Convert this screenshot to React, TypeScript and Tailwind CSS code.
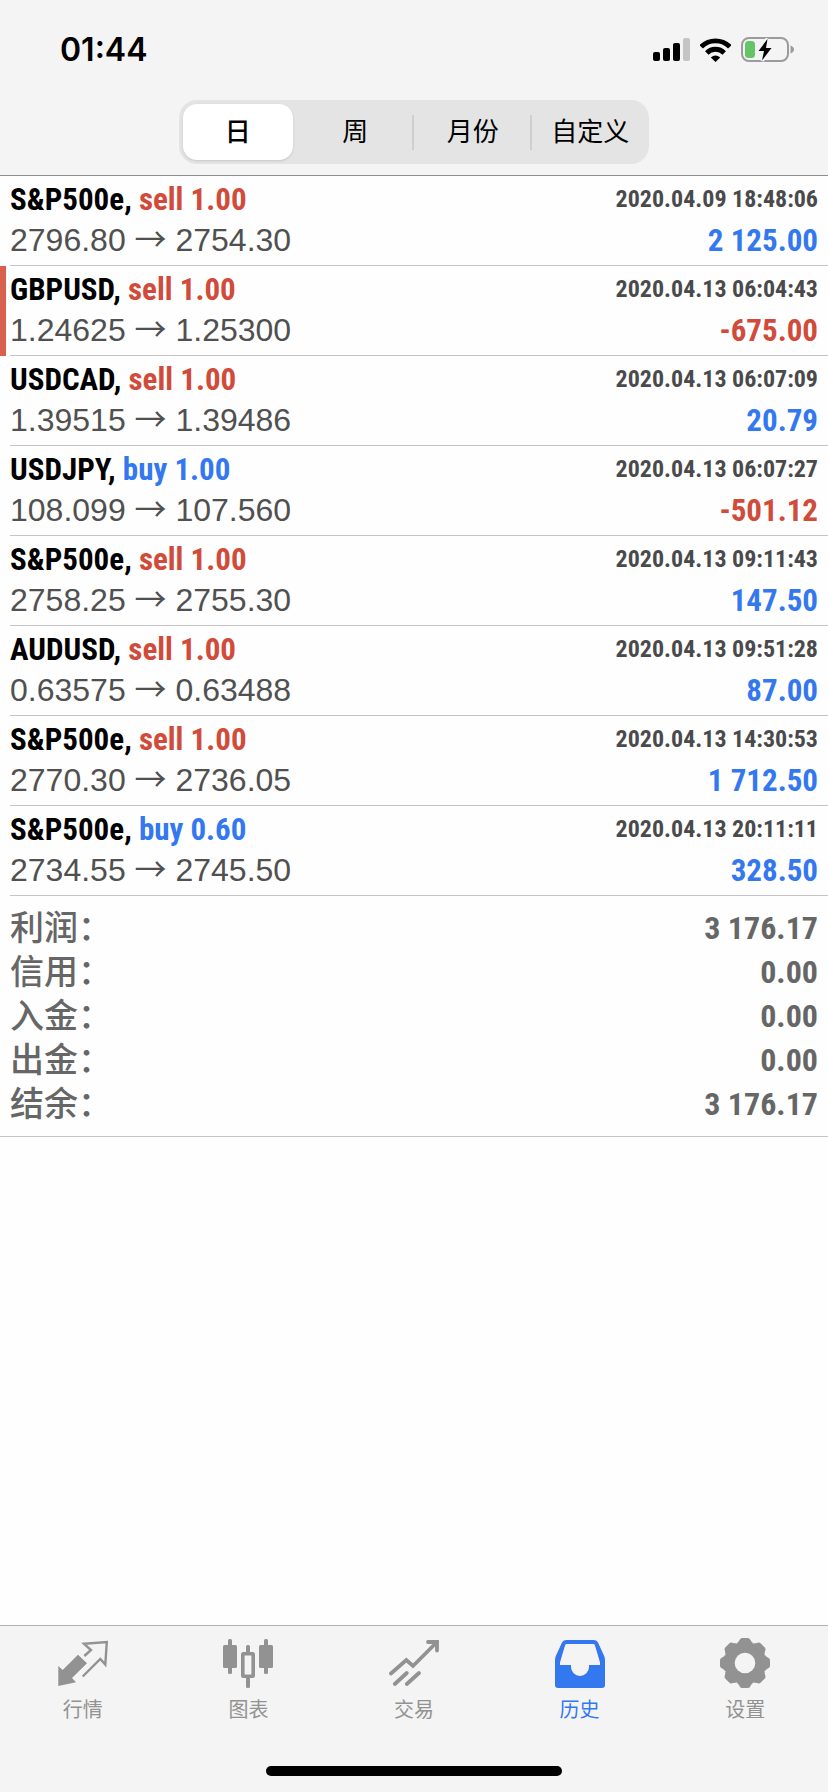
import { ReactNode, useState } from "react";
import clsx from "clsx";

type TDeal = {
  symbol: string;
  side: "sell" | "buy";
  volume: string;
  open: string;
  close: string;
  time: string;
  profit: string;
  marked?: boolean;
};

const DEALS: TDeal[] = [
  { symbol: "S&P500e", side: "sell", volume: "1.00", open: "2796.80", close: "2754.30", time: "2020.04.09 18:48:06", profit: "2 125.00" },
  { symbol: "GBPUSD", side: "sell", volume: "1.00", open: "1.24625", close: "1.25300", time: "2020.04.13 06:04:43", profit: "-675.00", marked: true },
  { symbol: "USDCAD", side: "sell", volume: "1.00", open: "1.39515", close: "1.39486", time: "2020.04.13 06:07:09", profit: "20.79" },
  { symbol: "USDJPY", side: "buy", volume: "1.00", open: "108.099", close: "107.560", time: "2020.04.13 06:07:27", profit: "-501.12" },
  { symbol: "S&P500e", side: "sell", volume: "1.00", open: "2758.25", close: "2755.30", time: "2020.04.13 09:11:43", profit: "147.50" },
  { symbol: "AUDUSD", side: "sell", volume: "1.00", open: "0.63575", close: "0.63488", time: "2020.04.13 09:51:28", profit: "87.00" },
  { symbol: "S&P500e", side: "sell", volume: "1.00", open: "2770.30", close: "2736.05", time: "2020.04.13 14:30:53", profit: "1 712.50" },
  { symbol: "S&P500e", side: "buy", volume: "0.60", open: "2734.55", close: "2745.50", time: "2020.04.13 20:11:11", profit: "328.50" },
];

const SUMMARY = [
  { label: "利润", value: "3 176.17" },
  { label: "信用", value: "0.00" },
  { label: "入金", value: "0.00" },
  { label: "出金", value: "0.00" },
  { label: "结余", value: "3 176.17" },
];

const PERIODS = ["日", "周", "月份", "自定义"];

const NARROW = "font-['Roboto_Condensed','Liberation_Sans_Narrow',sans-serif] font-bold";

const StatusBar = () => (
  <div className="flex h-[100px] items-center justify-between pl-[60px] pr-[34px]">
    <span className="font-['Inter',sans-serif] text-[32px] font-semibold leading-none">
      01:44
    </span>
    <div className="flex items-center gap-[10px]">
      <svg width="37" height="24" viewBox="0 0 37 24" aria-label="signal">
        <rect x="0" y="14" width="7" height="9" rx="2" />
        <rect x="10" y="10" width="7" height="13" rx="2" />
        <rect x="20" y="5" width="7" height="18" rx="2" />
        <rect x="30" y="0" width="7" height="23" rx="2" fill="#c4c4c4" />
      </svg>
      <svg width="31" height="24" viewBox="0.5 0 31 24" aria-label="wifi">
        <g fill="none" stroke="#000" strokeWidth="4.8">
          <path d="M1.700 8.800A20 20 0 0 1 30.300 8.800" />
          <path d="M7.300 15A12 12 0 0 1 24.700 15" />
        </g>
        <path d="M11.300 19.500Q16 15.500 20.700 19.500L16 24Z" />
      </svg>
      <svg width="53" height="26" viewBox="0 0 53 26" aria-label="battery">
        <rect x="1" y="1" width="46" height="23" rx="7" fill="none" stroke="#9b9b9f" strokeWidth="2" />
        <path d="M49.5 8.5Q53 10 53 12.5T49.5 16.5Z" fill="#9b9b9f" />
        <rect x="4" y="4" width="10" height="17" rx="3.5" fill="#65c466" />
        <path
          d="M26.5 2L17.5 14H23L21 23.5L30.5 11H25Z"
          fill="#000"
          stroke="#f4f4f4"
          strokeWidth="4"
          paintOrder="stroke"
        />
      </svg>
    </div>
  </div>
);

const PeriodSwitch = () => {
  const [active, setActive] = useState(0);

  return (
    <div className="mx-auto grid h-16 w-[470px] max-w-full grid-cols-4 rounded-[18px] bg-[#e4e4e4]">
      {PERIODS.map((period, i) => (
        <div key={period} className="flex items-center">
          <button
            onClick={() => setActive(i)}
            className={clsx(
              "mx-1 h-14 flex-1 rounded-[14px] text-[26px] leading-none",
              i === active && "bg-white font-medium shadow-sm"
            )}
          >
            {period}
          </button>
          {i > active && i < PERIODS.length - 1 && (
            <span className="-ml-0.5 h-[35px] w-0.5 bg-[#cfcfcf]" />
          )}
        </div>
      ))}
    </div>
  );
};

const DealRow = ({ deal }: { deal: TDeal }) => (
  <li className="flex">
    <span className={clsx("w-1.5", deal.marked && "bg-[#d8604f]")} />
    <div className="ml-1 flex-1 border-b border-[#c4c4c6] pr-2.5 pt-[3px] pb-1 leading-[41px]">
      <div className={clsx("flex justify-between", NARROW)}>
        <span className="text-[31px]">
          {deal.symbol},{" "}
          <span className={deal.side === "sell" ? "text-[#d14b3a]" : "text-[#3478f0]"}>
            {deal.side} {deal.volume}
          </span>
        </span>
        <time className="text-[24px] text-[#4a4a4c]">{deal.time}</time>
      </div>
      <div className="flex justify-between">
        <span className="font-['Liberation_Sans',sans-serif] text-[32px] text-[#505050]">
          {deal.open}{" "}
          <span className="font-['Noto_Sans_CJK_SC',sans-serif] leading-none">→</span>{" "}
          {deal.close}
        </span>
        <span
          className={clsx(
            "text-[31px]",
            NARROW,
            deal.profit.startsWith("-") ? "text-[#d14b3a]" : "text-[#3478f0]"
          )}
        >
          {deal.profit}
        </span>
      </div>
    </div>
  </li>
);

const QuotesIcon = () => (
  <svg width="50" height="50" viewBox="0 0 50 50">
    <path d="M0.3 28L4.7 32L20 16.7L29 25.3L14 40L18 44.3L0.3 48Z" fill="currentColor" />
    <path
      d="M26.3 18L33 12L26 5.8L48.8 4L47.3 26.5L42.3 21L24.7 38.5"
      fill="none"
      stroke="currentColor"
      strokeWidth="2.4"
    />
  </svg>
);

const ChartIcon = () => (
  <svg width="50" height="50" viewBox="0 0 50 50" fill="currentColor">
    <rect x="5" y="1" width="4" height="35" rx="1.5" />
    <rect x="0" y="7" width="14" height="23" rx="1.5" />
    <rect x="23" y="7" width="4" height="9" rx="1.5" />
    <rect x="23" y="38" width="4" height="12" rx="1.5" />
    <rect x="19.8" y="15.8" width="10.4" height="22.4" rx="0.5" fill="none" stroke="currentColor" strokeWidth="3.6" />
    <rect x="41" y="1" width="4" height="35" rx="1.5" />
    <rect x="36" y="7" width="14" height="23" rx="1.5" />
  </svg>
);

const TradeIcon = () => (
  <svg width="50" height="50" viewBox="0 0 50 50" fill="none" stroke="currentColor" strokeWidth="3.8" strokeLinecap="round">
    <path d="M2 35.5L17.3 22L24 28L47.5 4.5" />
    <path d="M39 4H48V12.5" />
    <path d="M5.8 46L17.8 35" />
    <path d="M17.8 46L30 35" />
  </svg>
);

const HistoryIcon = () => (
  <svg width="50" height="50" viewBox="0 0 50 50" fill="currentColor">
    <path
      fillRule="evenodd"
      d="M11 2H39Q42 2 43 4.600L49.200 18Q50 20 50 22V47Q50 50 47 50H3Q0 50 0 47V22Q0 20 0.800 18L7 4.600Q8 2 11 2ZM12 6Q10.500 6 10 7.400L5 24.500V27H16V29A9 9 0 0 0 34 29V27H45V24.500L40 7.400Q39.500 6 38 6Z"
    />
  </svg>
);

const SettingsIcon = () => (
  <svg width="50" height="50" viewBox="-25 -25 50 50" fill="currentColor">
    <circle r="20.500" />
    {[0, 45, 90, 135, 180, 225, 270, 315].map((angle) => (
      <path
        key={angle}
        transform={`rotate(${angle})`}
        d="M-9 -17L-7.500 -20.500Q-6.500 -21 -5.800 -22.500Q-4.800 -25 -3 -25H3Q4.800 -25 5.800 -22.500Q6.500 -21 7.500 -20.500L9 -17Z"
      />
    ))}
    <circle r="10.300" fill="#f4f4f4" />
  </svg>
);

const TABS: { label: string; icon: ReactNode }[] = [
  { label: "行情", icon: <QuotesIcon /> },
  { label: "图表", icon: <ChartIcon /> },
  { label: "交易", icon: <TradeIcon /> },
  { label: "历史", icon: <HistoryIcon /> },
  { label: "设置", icon: <SettingsIcon /> },
];

const TabBar = () => (
  <nav className="border-t border-[#b2b2b2] bg-[#f4f4f4] pt-3">
    <div className="grid grid-cols-5">
      {TABS.map(({ label, icon }) => (
        <a
          key={label}
          href="#"
          className={clsx(
            "flex flex-col items-center gap-2 text-[20px] leading-7",
            label === "历史" ? "text-[#3478f0]" : "text-[#929292]"
          )}
        >
          {icon}
          {label}
        </a>
      ))}
    </div>
    <div className="mx-auto mt-[42px] mb-4 h-2.5 w-[296px] rounded-full bg-black" />
  </nav>
);

const App = () => {
  return (
    <div className="flex min-h-screen flex-col bg-[#fefefe] font-['Liberation_Sans','Noto_Sans_CJK_SC',sans-serif] text-black">
      <header className="border-b border-[#8e8e8e] bg-[#f4f4f4] pb-[11px]">
        <StatusBar />
        <PeriodSwitch />
      </header>
      <main className="flex-1">
        <ul>
          {DEALS.map((deal) => (
            <DealRow key={deal.time} deal={deal} />
          ))}
        </ul>
        <dl lang="zh-CN" className="border-b border-[#c4c4c6] px-2.5 py-2.5 leading-[44px] text-[#666]">
          {SUMMARY.map(({ label, value }) => (
            <div key={label} className="flex justify-between">
              <dt className="text-[34px] font-medium">{label}：</dt>
              <dd className={clsx("text-[32px]", NARROW)}>{value}</dd>
            </div>
          ))}
        </dl>
      </main>
      <TabBar />
    </div>
  );
};

export default App;
